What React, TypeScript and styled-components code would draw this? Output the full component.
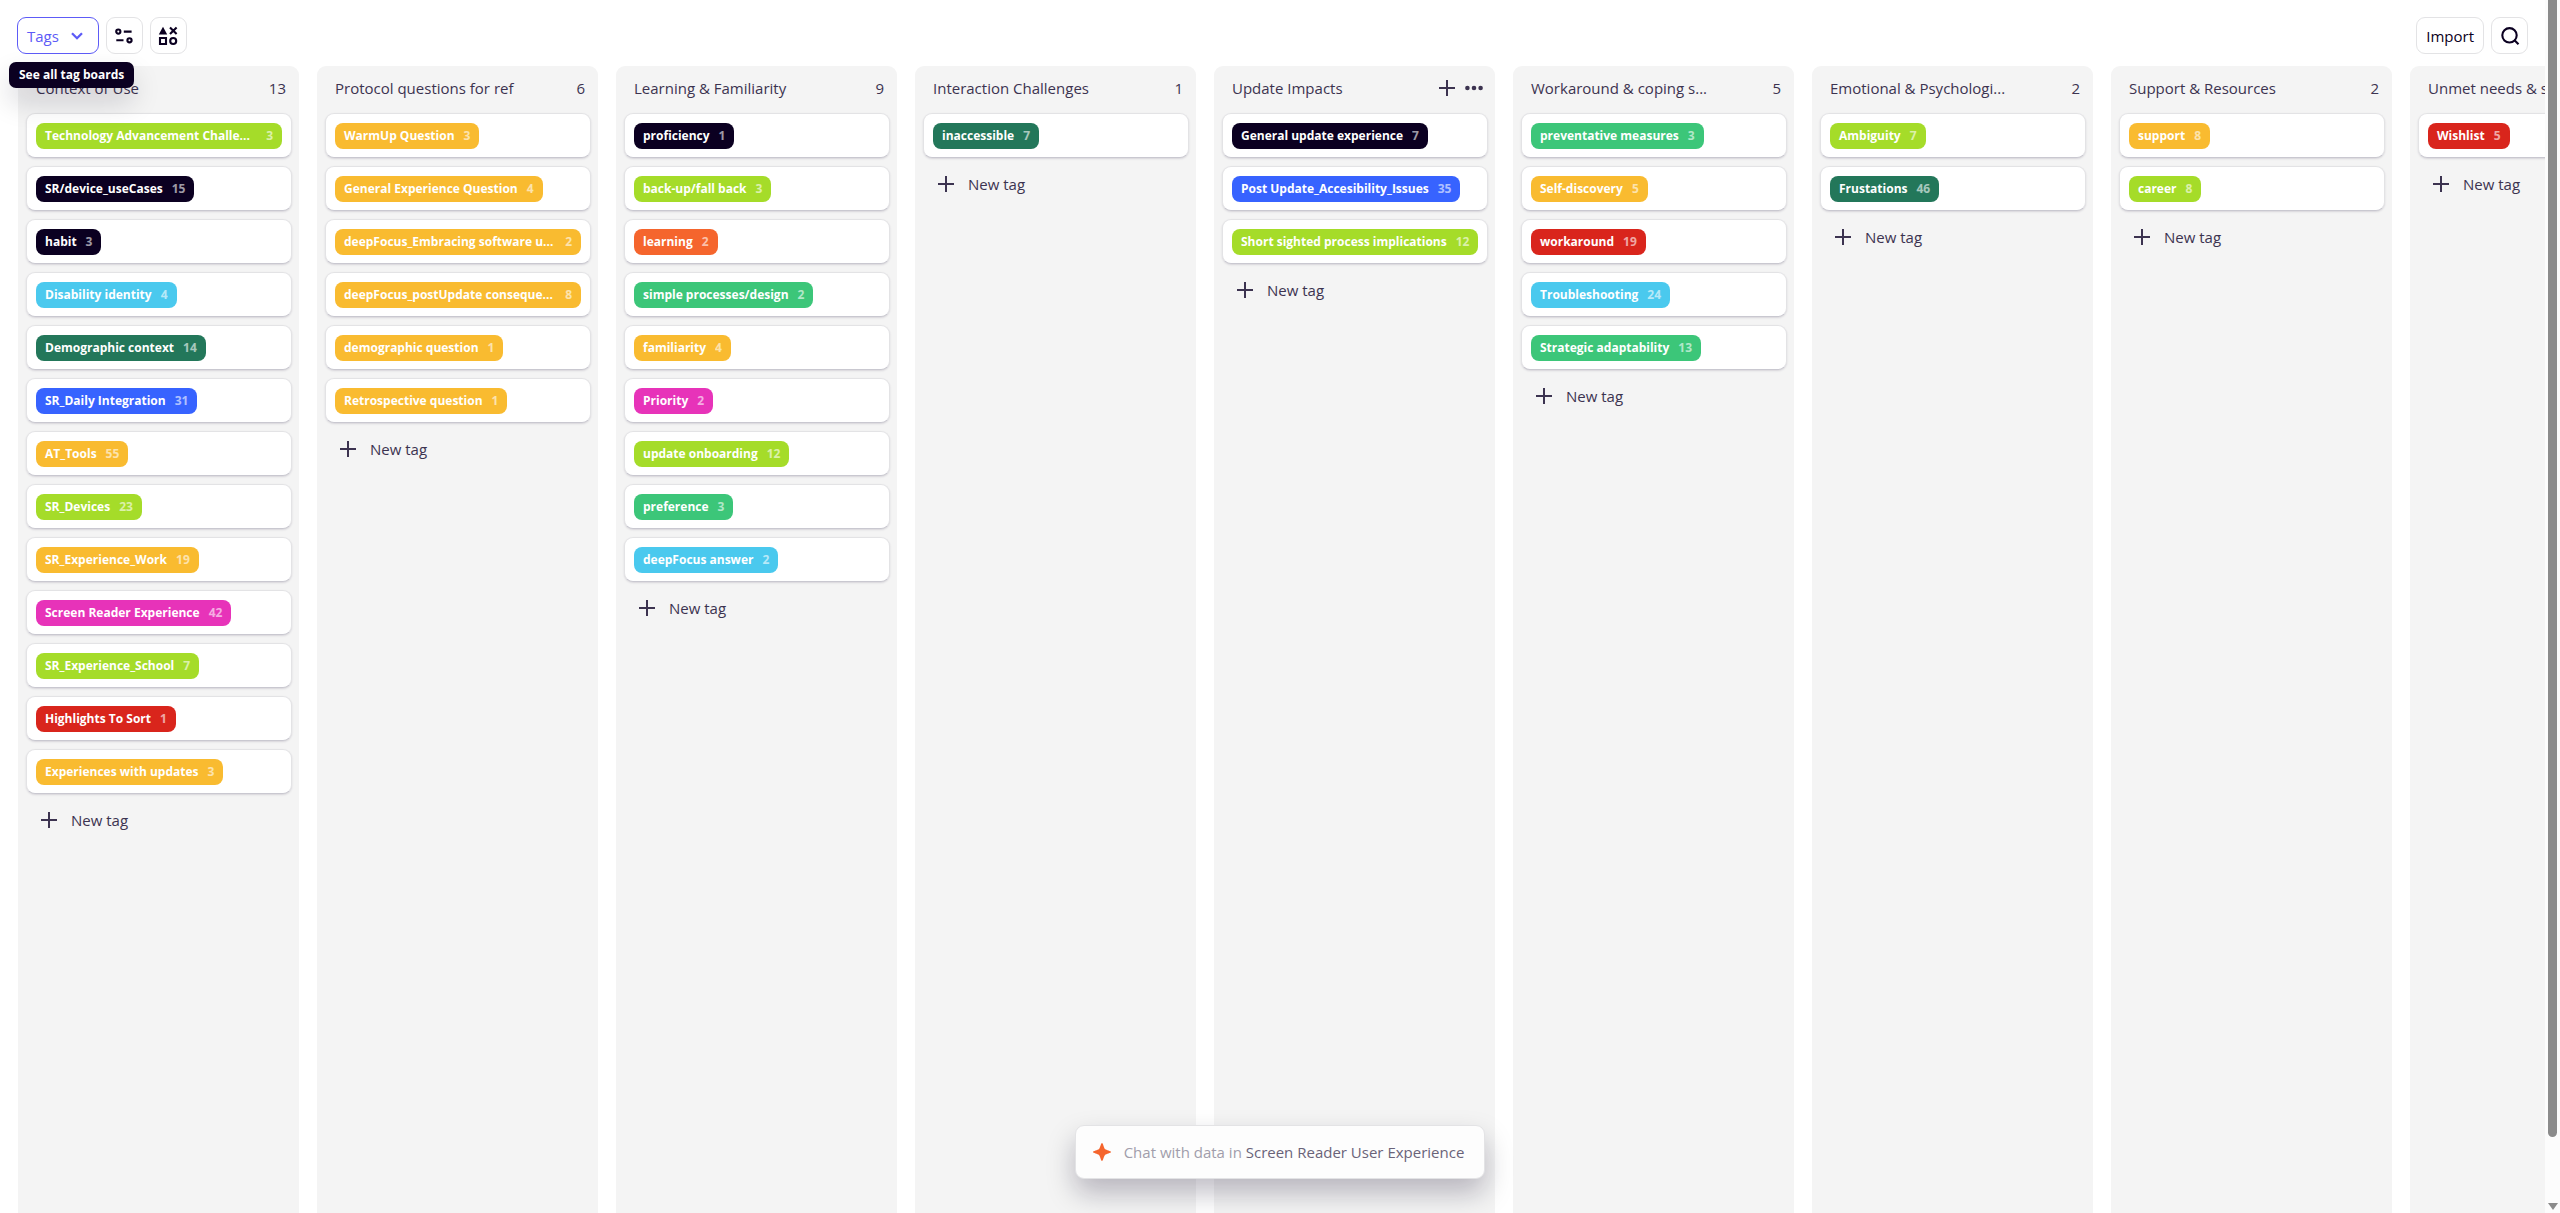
import React from "react";
import styled, { createGlobalStyle } from "styled-components";

const GlobalStyle = createGlobalStyle`
  *, *::before, *::after { box-sizing: border-box; }
  html, body { margin: 0; height: 100%; overflow: hidden; }
  #root { height: 100%; }
  body, button { font-family: "Open Sans", "Noto Sans", sans-serif; }
  button { margin: 0; cursor: pointer; }
`;

const colors = {
  ink: "#0b0021",
  text: "#3c3350",
  lime: "#a5dc29",
  black: "#0b0021",
  sky: "#4ac9ee",
  forest: "#23775a",
  blue: "#3763ff",
  amber: "#f9bb30",
  pink: "#e733b9",
  red: "#d9251c",
  orange: "#f5652d",
  green: "#3cc679",
};

type Tone = keyof typeof colors;
type Tag = [label: string, count: number, tone: Tone];
interface Board {
  title: string;
  count?: number;
  hovered?: boolean;
  tags: Tag[];
}

const boards: Board[] = [
  {
    title: "Context of Use",
    count: 13,
    tags: [
      ["Technology Advancement Challe...", 3, "lime"],
      ["SR/device_useCases", 15, "black"],
      ["habit", 3, "black"],
      ["Disability identity", 4, "sky"],
      ["Demographic context", 14, "forest"],
      ["SR_Daily Integration", 31, "blue"],
      ["AT_Tools", 55, "amber"],
      ["SR_Devices", 23, "lime"],
      ["SR_Experience_Work", 19, "amber"],
      ["Screen Reader Experience", 42, "pink"],
      ["SR_Experience_School", 7, "lime"],
      ["Highlights To Sort", 1, "red"],
      ["Experiences with updates", 3, "amber"],
    ],
  },
  {
    title: "Protocol questions for ref",
    count: 6,
    tags: [
      ["WarmUp Question", 3, "amber"],
      ["General Experience Question", 4, "amber"],
      ["deepFocus_Embracing software u...", 2, "amber"],
      ["deepFocus_postUpdate conseque...", 8, "amber"],
      ["demographic question", 1, "amber"],
      ["Retrospective question", 1, "amber"],
    ],
  },
  {
    title: "Learning & Familiarity",
    count: 9,
    tags: [
      ["proficiency", 1, "black"],
      ["back-up/fall back", 3, "lime"],
      ["learning", 2, "orange"],
      ["simple processes/design", 2, "green"],
      ["familiarity", 4, "amber"],
      ["Priority", 2, "pink"],
      ["update onboarding", 12, "lime"],
      ["preference", 3, "green"],
      ["deepFocus answer", 2, "sky"],
    ],
  },
  { title: "Interaction Challenges", count: 1, tags: [["inaccessible", 7, "forest"]] },
  {
    title: "Update Impacts",
    hovered: true,
    tags: [
      ["General update experience", 7, "black"],
      ["Post Update_Accesibility_Issues", 35, "blue"],
      ["Short sighted process implications", 12, "lime"],
    ],
  },
  {
    title: "Workaround & coping s...",
    count: 5,
    tags: [
      ["preventative measures", 3, "green"],
      ["Self-discovery", 5, "amber"],
      ["workaround", 19, "red"],
      ["Troubleshooting", 24, "sky"],
      ["Strategic adaptability", 13, "green"],
    ],
  },
  {
    title: "Emotional & Psychologi...",
    count: 2,
    tags: [
      ["Ambiguity", 7, "lime"],
      ["Frustations", 46, "forest"],
    ],
  },
  {
    title: "Support & Resources",
    count: 2,
    tags: [
      ["support", 8, "amber"],
      ["career", 8, "lime"],
    ],
  },
  { title: "Unmet needs & s", tags: [["Wishlist", 5, "red"]] },
];

const Shell = styled.div`
  position: relative;
  display: flex;
  height: 100vh;
  background: #fff;
  color: ${colors.text};
`;

const Page = styled.main`
  flex: 1;
  min-width: 0;
  display: flex;
  flex-direction: column;
  overflow: hidden;
`;

const Toolbar = styled.header`
  display: flex;
  justify-content: space-between;
  padding: 17px 17px 12px;
`;

const ToolGroup = styled.div`
  position: relative;
  display: flex;
  gap: 7px;
`;

const ToolButton = styled.button<{ $square?: boolean; $active?: boolean }>`
  display: flex;
  align-items: center;
  justify-content: center;
  gap: 12px;
  height: 37px;
  width: ${(p) => (p.$square ? "37px" : "auto")};
  padding: ${(p) => (p.$square ? "0" : p.$active ? "0 15px 0 9px" : "0 9px")};
  border: 1px solid ${(p) => (p.$active ? "#5d5bf7" : "#e3e3e5")};
  border-radius: 9px;
  background: #fff;
  color: ${(p) => (p.$active ? "#5d5bf7" : colors.ink)};
  font-size: 15px;
  line-height: 22px;
`;

const Tooltip = styled.div`
  position: absolute;
  z-index: 2;
  top: 45px;
  left: -8px;
  padding: 0 10px;
  border-radius: 7px;
  background: ${colors.ink};
  box-shadow: 0 14px 28px rgba(11, 0, 33, 0.16);
  color: #fff;
  font-size: 12px;
  font-weight: 700;
  line-height: 26px;
  white-space: nowrap;
`;

const BoardRow = styled.div`
  flex: 1;
  display: flex;
  gap: 18px;
  padding-left: 18px;
  overflow: hidden;
`;

const Column = styled.section`
  flex: 0 0 281px;
  min-width: 0;
  padding: 0 7px 0 8px;
  border-radius: 9px 9px 0 0;
  background: #f4f4f4;
`;

const ColumnHeader = styled.div`
  display: flex;
  align-items: center;
  justify-content: space-between;
  height: 47px;
  padding: 0 5px 3px 10px;
`;

const ColumnTitle = styled.h2`
  margin: 0;
  font-size: 15px;
  font-weight: 400;
  line-height: 22px;
  white-space: nowrap;
`;

const ColumnCount = styled.span`
  padding-right: 1px;
  font-size: 15px;
  line-height: 22px;
`;

const HeaderActions = styled.div`
  display: flex;
  gap: 9px;
`;

const IconButton = styled.button`
  display: flex;
  padding: 0;
  border: 0;
  background: none;
  color: ${colors.text};
`;

const CardList = styled.ul`
  display: flex;
  flex-direction: column;
  gap: 8px;
  margin: 0;
  padding: 0;
  list-style: none;
`;

const Card = styled.li`
  height: 45px;
  padding: 9px 9px 0;
  border: 1px solid #e3e3e5;
  border-bottom-color: #c9c8d0;
  border-radius: 9px;
  background: #fff;
  box-shadow: 0 1px 2px rgba(60, 51, 80, 0.16);
`;

const Chip = styled.button<{ $tone: Tone; $full: boolean }>`
  display: flex;
  align-items: center;
  justify-content: space-between;
  gap: 9px;
  width: ${(p) => (p.$full ? "100%" : "auto")};
  height: 26px;
  padding: 0 9px;
  border: 0;
  border-radius: 8px;
  background: ${(p) => colors[p.$tone]};
  color: #fff;
  font-size: 12px;
  font-weight: 700;
  line-height: 18px;
  white-space: nowrap;
`;

const ChipCount = styled.span`
  opacity: 0.6;
`;

const NewTag = styled.button`
  display: flex;
  align-items: center;
  gap: 13px;
  height: 44px;
  margin-top: 4px;
  padding: 0 14px;
  border: 0;
  background: none;
  color: ${colors.text};
  font-size: 15px;
  line-height: 22px;
`;

const ChatDock = styled.div`
  position: absolute;
  z-index: 3;
  right: 0;
  bottom: 34px;
  left: 0;
  display: flex;
  justify-content: center;
`;

const ChatBar = styled.button`
  display: flex;
  align-items: center;
  gap: 12px;
  height: 54px;
  padding: 0 20px 0 16px;
  border: 1px solid #e3e3e5;
  border-radius: 9px;
  background: #fdfdfd;
  box-shadow: 0 14px 28px rgba(11, 0, 33, 0.26);
  color: #a19dab;
  font-size: 15px;
  line-height: 22px;
  white-space: nowrap;
`;

const ChatScope = styled.span`
  color: #6a6379;
`;

const ScrollTrack = styled.div`
  flex: 0 0 15px;
  display: flex;
  flex-direction: column;
  justify-content: space-between;
  align-items: center;
  padding-bottom: 3px;
  background: #fcfcfc;
`;

const ScrollThumb = styled.div`
  width: 9px;
  height: 94%;
  border-radius: 0 0 5px 5px;
  background: #8b8b8b;
`;

const ScrollArrow = styled.div`
  border: solid transparent;
  border-width: 7px 5px 0;
  border-top-color: #8b8b8b;
`;

const PlusIcon = () => (
  <svg width="18" height="18" viewBox="0 0 18 18" fill="none" stroke="currentColor" strokeWidth="2" aria-hidden="true">
    <path d="M9 1v16M1 9h16" />
  </svg>
);

const MoreIcon = () => (
  <svg width="18" height="18" viewBox="0 0 18 18" fill="currentColor" aria-hidden="true">
    <circle cx="2.4" cy="9" r="2.3" />
    <circle cx="9" cy="9" r="2.3" />
    <circle cx="15.6" cy="9" r="2.3" />
  </svg>
);

const ChevronIcon = () => (
  <svg width="12" height="8" viewBox="0 0 12 8" fill="none" stroke="currentColor" strokeWidth="2.3" aria-hidden="true">
    <path d="M1 1.200l5 5 5-5" />
  </svg>
);

const FiltersIcon = () => (
  <svg width="18" height="16" viewBox="0 0 18 16" fill="none" stroke="currentColor" strokeWidth="2.1" aria-hidden="true">
    <circle cx="3.300" cy="3.600" r="2.100" />
    <path d="M8.800 3.600h7.800M1.300 12.300h7.200" />
    <circle cx="14.500" cy="12.300" r="2.100" />
  </svg>
);

const ShapesIcon = () => (
  <svg width="20" height="20" viewBox="0 0 20 20" fill="none" stroke="currentColor" strokeWidth="2.1" aria-hidden="true">
    <path d="M5 .8L9.200 8.600H.8z" fill="currentColor" stroke="none" />
    <path d="M12 1.500l6.600 6.600M18.600 1.500L12 8.100" />
    <path d="M2 12h6v6H2z" />
    <circle cx="15.200" cy="15" r="3" />
  </svg>
);

const SearchIcon = () => (
  <svg width="20" height="20" viewBox="0 0 20 20" fill="none" stroke="currentColor" strokeWidth="2.1" aria-hidden="true">
    <circle cx="9.500" cy="9.300" r="7.200" />
    <path d="M14 13.800l4.500 4.500" />
  </svg>
);

const SparkIcon = () => (
  <svg width="20" height="20" viewBox="0 0 20 20" fill={colors.orange} aria-hidden="true">
    <path d="M10 1c1.100 0 1.700 4.800 3 6s6 1.900 6 3-4.700 1.700-6 3-1.900 6-3 6-1.700-4.700-3-6-6-1.900-6-3 4.700-1.800 6-3 1.900-6 3-6z" />
  </svg>
);

const BoardColumn = ({ title, count, hovered, tags }: Board) => (
  <Column>
    <ColumnHeader>
      <ColumnTitle>{title}</ColumnTitle>
      {hovered && (
        <HeaderActions>
          <IconButton aria-label="Add tag"><PlusIcon /></IconButton>
          <IconButton aria-label="More"><MoreIcon /></IconButton>
        </HeaderActions>
      )}
      {count !== undefined && <ColumnCount>{count}</ColumnCount>}
    </ColumnHeader>
    <CardList>
      {tags.map(([label, n, tone]) => (
        <Card key={label}>
          <Chip $tone={tone} $full={label.endsWith("...")}>
            <span>{label}</span>
            <ChipCount>{n}</ChipCount>
          </Chip>
        </Card>
      ))}
    </CardList>
    <NewTag><PlusIcon />New tag</NewTag>
  </Column>
);

export default function App() {
  return (
    <Shell>
      <GlobalStyle />
      <Page>
        <Toolbar>
          <ToolGroup>
            <ToolButton $active>Tags<ChevronIcon /></ToolButton>
            <ToolButton $square aria-label="Filters"><FiltersIcon /></ToolButton>
            <ToolButton $square aria-label="Tag types"><ShapesIcon /></ToolButton>
            <Tooltip role="tooltip">See all tag boards</Tooltip>
          </ToolGroup>
          <ToolGroup>
            <ToolButton>Import</ToolButton>
            <ToolButton $square aria-label="Search"><SearchIcon /></ToolButton>
          </ToolGroup>
        </Toolbar>
        <BoardRow>
          {boards.map((b) => <BoardColumn key={b.title} {...b} />)}
        </BoardRow>
      </Page>
      <ScrollTrack aria-hidden="true">
        <ScrollThumb />
        <ScrollArrow />
      </ScrollTrack>
      <ChatDock>
        <ChatBar>
          <SparkIcon />
          <span>Chat with data in <ChatScope>Screen Reader User Experience</ChatScope></span>
        </ChatBar>
      </ChatDock>
    </Shell>
  );
}
